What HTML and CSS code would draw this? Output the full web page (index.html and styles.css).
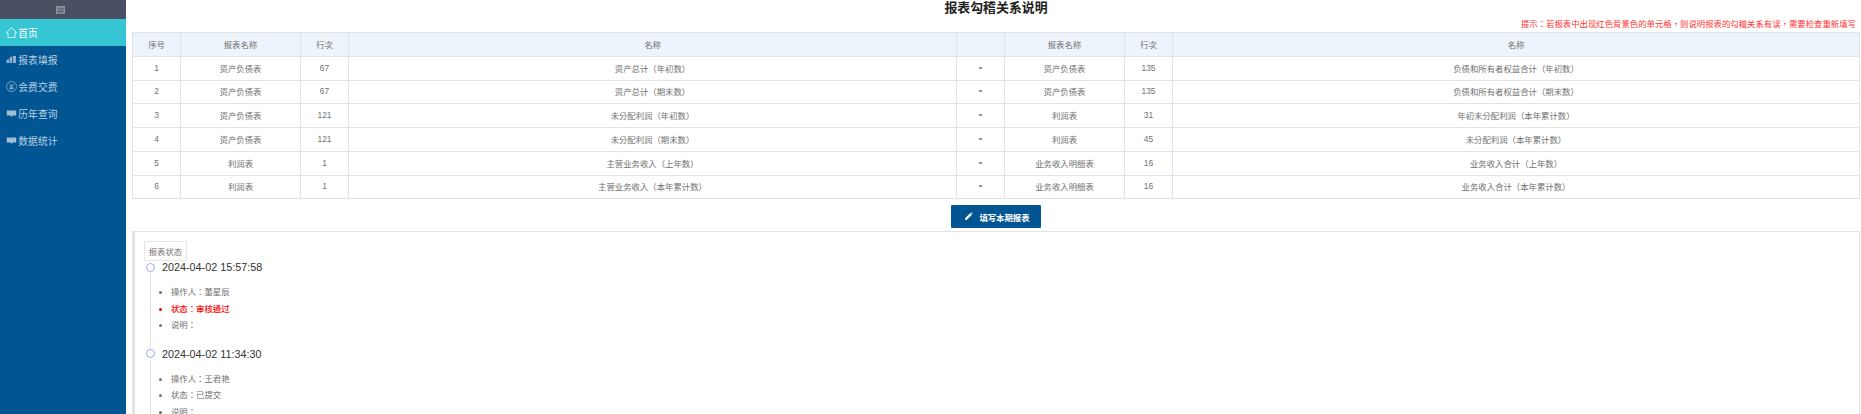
FILE: index.html
```html
<!DOCTYPE html>
<html lang="zh-Hant">
<head>
<meta charset="utf-8">
<title>报表勾稽关系说明</title>
<link rel="stylesheet" href="styles.css">
</head>
<body>
<div class="app">
  <aside class="sidebar">
    <div class="side-top">
      <svg class="grid-icon" width="9" height="8" viewBox="0 0 9 8"><path fill="#8f93a1" d="M0 0h9v8H0z"/><path stroke="#4a5064" stroke-width=".7" d="M3 1v7M6 1v7M1 3h7M1 5.500h7"/></svg>
    </div>
    <nav class="menu">
      <a class="menu-item active">
        <svg class="icon" viewBox="0 0 11 11"><path fill="none" stroke="#fff" stroke-width=".8" d="M.4 5.800 5.500.6l5.100 5.200H9v4.800H2V5.800z"/></svg>首页</a>
      <a class="menu-item">
        <svg class="icon" viewBox="0 0 11 11"><path fill="#8fb0cd" d="M.5 5.500h2.500V9H.5zM3.500 3.500 6 2.500V9H3.500zM6.800 2H10v7H6.800z"/></svg>报表填报</a>
      <a class="menu-item">
        <svg class="icon" viewBox="0 0 11 11"><circle cx="5.500" cy="5.500" r="5" fill="none" stroke="#8fb0cd" stroke-width=".8"/><path fill="none" stroke="#8fb0cd" d="M3.500 2.800 5.500 5.500l2-2.700M5.500 5.500v3M3.500 6h4M3.500 7.500h4"/></svg>会费交费</a>
      <a class="menu-item">
        <svg class="icon" viewBox="0 0 11 11"><path fill="#a3bfd8" d="M.8 2.500h9.400v5H6.500l-1 1.500-1-1.500H.8z"/></svg>历年查询</a>
      <a class="menu-item">
        <svg class="icon" viewBox="0 0 11 11"><path fill="#a3bfd8" d="M.8 2.500h9.400v5H6.500l-1 1.500-1-1.500H.8z"/></svg>数据统计</a>
    </nav>
  </aside>
  <main class="content">
    <h1 class="title">报表勾稽关系说明</h1>
    <p class="note">提示：若报表中出现红色背景色的单元格，则说明报表的勾稽关系有误，需要检查重新填写</p>
    <table class="grid">
      <colgroup>
        <col class="c-no"><col class="c-sheet"><col class="c-line"><col class="c-name">
        <col class="c-op"><col class="c-sheet"><col class="c-line"><col>
      </colgroup>
      <thead>
        <tr><th>序号</th><th>报表名称</th><th>行次</th><th>名称</th><th></th><th>报表名称</th><th>行次</th><th>名称</th></tr>
      </thead>
      <tbody>
        <tr><td>1</td><td>资产负债表</td><td>67</td><td>资产总计（年初数）</td><td class="op">=</td><td>资产负债表</td><td>135</td><td>负债和所有者权益合计（年初数）</td></tr>
        <tr><td>2</td><td>资产负债表</td><td>67</td><td>资产总计（期末数）</td><td class="op">=</td><td>资产负债表</td><td>135</td><td>负债和所有者权益合计（期末数）</td></tr>
        <tr><td>3</td><td>资产负债表</td><td>121</td><td>未分配利润（年初数）</td><td class="op">=</td><td>利润表</td><td>31</td><td>年初未分配利润（本年累计数）</td></tr>
        <tr><td>4</td><td>资产负债表</td><td>121</td><td>未分配利润（期末数）</td><td class="op">=</td><td>利润表</td><td>45</td><td>未分配利润（本年累计数）</td></tr>
        <tr><td>5</td><td>利润表</td><td>1</td><td>主营业务收入（上年数）</td><td class="op">=</td><td>业务收入明细表</td><td>16</td><td>业务收入合计（上年数）</td></tr>
        <tr><td>6</td><td>利润表</td><td>1</td><td>主营业务收入（本年累计数）</td><td class="op">=</td><td>业务收入明细表</td><td>16</td><td>业务收入合计（本年累计数）</td></tr>
      </tbody>
    </table>
    <div class="actions">
      <button class="btn" type="button">
        <svg class="pencil" viewBox="0 0 10 10"><path fill="#fff" d="M7 1.200 8.800 3 3 8.800H1.200V7zM7.700.5l.6-.4 1.600 1.600-.4.6z"/></svg>填写本期报表</button>
    </div>
    <section class="panel">
      <div class="legend">报表状态</div>
      <div class="tl-head"><span class="dot"></span><span class="time">2024-04-02 15:57:58</span></div>
      <ul class="tl-body">
        <li>操作人：董星辰</li>
        <li class="passed">状态：审核通过</li>
        <li>说明：</li>
      </ul>
      <div class="tl-head"><span class="dot"></span><span class="time">2024-04-02 11:34:30</span></div>
      <ul class="tl-body">
        <li>操作人：王君艳</li>
        <li>状态：已提交</li>
        <li>说明：</li>
      </ul>
    </section>
  </main>
</div>
</body>
</html>
```

FILE: styles.css
```css
* { box-sizing: border-box; }
html, body { margin: 0; height: 414px; overflow: hidden; background: #fff; }
body { font-family: "Liberation Sans", "Noto Sans CJK TC", sans-serif; font-size: 8.4px; color: #707070; }
.app { display: flex; height: 414px; }
.sidebar { flex: 0 0 126px; background: #005592; }
.side-top { height: 19px; background: #4a5064; display: flex; align-items: center; justify-content: center; padding-right: 5px; }
.menu { display: flex; flex-direction: column; }
.menu-item { height: 27px; display: flex; align-items: center; padding-left: 5.500px; font-size: 9.800px; color: #bdd0e2; }
.menu-item.active { background: #36c6d3; color: #fff; }
.icon { width: 11px; height: 11px; margin-right: 1.800px; flex: none; }
.content { flex: 1; min-width: 0; padding: 0 1px 0 6px; }
.title { margin: 0; height: 19px; font-size: 12.900px; line-height: 16px; font-weight: 700; color: #222; text-align: center; }
.note { margin: 0; height: 13px; line-height: 11px; padding-right: 4px; text-align: right; color: #f33; }
.grid { width: 100%; table-layout: fixed; border-collapse: collapse; }
.c-no { width: 48px; }
.c-sheet { width: 120px; }
.c-line { width: 48px; }
.c-name { width: 608px; }
.c-op { width: 48px; }
.grid th, .grid td { height: 24px; padding: 0 0 1.500px; border: 1px solid #e3e3e3; text-align: center; font-weight: 400; }
.grid tbody tr:nth-child(4n+2) td { height: 23px; }
.grid th { background: #edf4fc; }
.grid .op { font-size: 6px; font-weight: 700; color: #333; }
.actions { display: flex; justify-content: center; padding-top: 6px; height: 32px; }
.btn { width: 90px; height: 23px; padding: 0 0 0 2px; border: 0; border-radius: 1px; background: #005592; color: #fff; font: 700 8.400px "Liberation Sans", "Noto Sans CJK TC", sans-serif; display: flex; align-items: center; justify-content: center; }
.pencil { width: 9px; height: 9px; margin-right: 6px; }
.panel { border: solid #e3e3e3; border-width: 1px 1px 0 3px; padding: 9px 0 0 9px; }
.legend { display: flex; align-items: center; justify-content: center; width: 43px; height: 20px; border: 1px solid #e5e5e5; }
.tl-head { display: flex; align-items: center; height: 12px; margin-left: 2px; }
.dot { width: 9px; height: 9px; border: 1px solid #9aa7ee; border-radius: 50%; margin-right: 7px; background: #fff; }
.time { font-size: 10.800px; color: #333; }
.tl-body { margin: 0 0 0 6px; padding: 11px 0 14px 20px; border-left: 1px solid #e0e0e0; line-height: 16.500px; }
.passed { color: #f00; font-weight: 500; }
```
